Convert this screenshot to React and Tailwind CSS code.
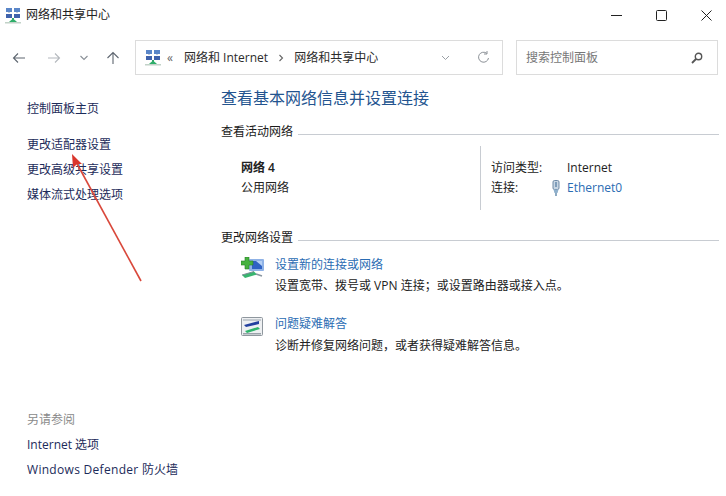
import React from "react";

const FONT = "font-['Open_Sans','Noto_Sans_CJK_SC',sans-serif]";

function NetIcon() {
  return (
    <svg width="16" height="17" viewBox="0 0 16 17" className="shrink-0">
      <rect x="1" y="1" width="6" height="4" fill="#5a86c8" />
      <rect x="9" y="1" width="6" height="4" fill="#5a86c8" />
      <rect x="1" y="7" width="6" height="4" fill="#3f62ac" />
      <rect x="9" y="7" width="6" height="4" fill="#3f62ac" />
      <rect x="3" y="5" width="2" height="1" fill="#c4cede" />
      <rect x="11" y="5" width="2" height="1" fill="#c4cede" />
      <rect x="7" y="11" width="2" height="3" fill="#3aa76d" />
      <path d="M4 15 L8 11.5 L12 15 Z" fill="#2fae6a" />
      <rect x="0" y="15" width="16" height="1.5" fill="#c2d2c8" />
    </svg>
  );
}

function NewConnIcon() {
  return (
    <svg width="24" height="22" viewBox="0 0 24 22" className="shrink-0">
      <rect x="8" y="2" width="15" height="12" rx="1" fill="#8fb2e6" />
      <path d="M11 4 H21 V12 H11 Z" fill="#2f62c4" />
      <path d="M15 4 H21 V9 Z" fill="#b5d0f4" />
      <path d="M4 0 H8 V4 H12 V8 H8 V12 H4 V8 H0 V4 H4 Z" fill="#46b23f" stroke="#2a7d2a" strokeWidth="0.6" />
      <path d="M1 18 L13 14.5 L16 17.5 L4 21 Z" fill="#39b56f" />
      <path d="M1 18 L13 14.5" stroke="#7d8c95" strokeWidth="1" />
      <path d="M15 17 L21 19" stroke="#8a96a0" strokeWidth="1.5" />
    </svg>
  );
}

function TroubleIcon() {
  return (
    <svg width="22" height="19" viewBox="0 0 22 19" className="shrink-0">
      <rect x="0.5" y="0.5" width="21" height="18" rx="1" fill="#eef0f2" stroke="#8f979e" />
      <rect x="2" y="2" width="18" height="2" fill="#c4cad0" />
      <path d="M3 8 L18 4 L18 7 L5 10 Z" fill="#23409f" />
      <path d="M4 14 L17 10 L19 12 L6 16 Z" fill="#2fb56c" />
      <rect x="2" y="16" width="18" height="1.5" fill="#9aa3aa" />
    </svg>
  );
}

function PlugIcon() {
  return (
    <svg width="10" height="16" viewBox="0 0 10 16" className="shrink-0">
      <rect x="2" y="0.5" width="6" height="9" rx="1.5" fill="#c8d6e3" stroke="#6f8aa6" />
      <rect x="4" y="2" width="2" height="5" fill="#7f9db9" />
      <path d="M2.5 9.5 H7.5 L6.5 13 H3.5 Z" fill="#8fb0cc" />
      <rect x="4.3" y="13" width="1.4" height="3" fill="#5f86a8" />
    </svg>
  );
}

function Section({ title }) {
  return (
    <div className="flex items-center h-5 pr-[7px] text-[#1a1a1a]">
      <span>{title}</span>
      <div className="flex-1 h-px bg-[#c8ccd2] ml-[5px] mt-[4px]" />
    </div>
  );
}

export default function App() {
  return (
    <div className={`relative w-[726px] h-[496px] bg-white overflow-hidden flex flex-col text-[12px] leading-5 ${FONT}`}>
      {/* title bar */}
      <div className="h-[30px] flex items-center pl-[5px] text-[#222]">
        <NetIcon />
        <span className="ml-[5px]">网络和共享中心</span>
        <div className="ml-auto flex items-center pr-[14px] gap-[34px]">
          <svg width="11" height="11" viewBox="0 0 11 11"><path d="M0 5.5 H11" stroke="#222" strokeWidth="1" /></svg>
          <svg width="11" height="11" viewBox="0 0 11 11"><rect x="0.5" y="0.5" width="10" height="10" rx="1" fill="none" stroke="#222" /></svg>
          <svg width="11" height="11" viewBox="0 0 11 11"><path d="M0.5 0.5 L10.5 10.5 M10.5 0.5 L0.5 10.5" stroke="#222" strokeWidth="1" /></svg>
        </div>
      </div>

      {/* nav bar */}
      <div className="h-[35px] mt-[10px] flex items-center shrink-0">
        <div className="w-[135px] flex items-center pl-[12px] shrink-0">
          <svg width="14" height="12" viewBox="0 0 14 12"><path d="M13 6 H1.5 M6 1.5 L1.5 6 L6 10.5" fill="none" stroke="#5e6670" strokeWidth="1.1" /></svg>
          <svg width="14" height="12" viewBox="0 0 14 12" className="ml-[21px]"><path d="M1 6 H12.5 M8 1.5 L12.5 6 L8 10.5" fill="none" stroke="#b4b8bd" strokeWidth="1.1" /></svg>
          <svg width="10" height="6" viewBox="0 0 10 6" className="ml-[18px]"><path d="M1.5 1 L5 4.5 L8.5 1" fill="none" stroke="#8a9097" strokeWidth="1.1" /></svg>
          <svg width="14" height="14" viewBox="0 0 14 14" className="ml-[17px]"><path d="M7 13 V1.5 M1.5 7 L7 1.5 L12.5 7" fill="none" stroke="#5e6670" strokeWidth="1.1" /></svg>
        </div>
        <div className="w-[368px] h-[35px] border border-[#dcdcdc] flex items-center pl-[9px] shrink-0 text-[#2b2b2b]">
          <NetIcon />
          <span className="ml-[6px] text-[#666] w-[10px]">«</span>
          <span className="ml-[7px]">网络和 Internet</span>
          <svg width="6" height="8" viewBox="0 0 6 8" className="ml-[10px]"><path d="M1.5 1 L4.5 4 L1.5 7" fill="none" stroke="#666" strokeWidth="1.1" /></svg>
          <span className="ml-[10px]">网络和共享中心</span>
          <svg width="9" height="6" viewBox="0 0 9 6" className="ml-auto mr-[27px]"><path d="M1 1 L4.5 4.5 L8 1" fill="none" stroke="#9a9fa5" strokeWidth="1" /></svg>
          <svg width="13" height="13" viewBox="0 0 13 13" className="mr-[12px]"><path d="M11.5 7 A5 5 0 1 1 9.8 2.4 M10 0 V3 H7" fill="none" stroke="#8d9298" strokeWidth="1" /></svg>
        </div>
        <div className="ml-[13px] w-[202px] h-[35px] border border-[#dcdcdc] flex items-center pl-[9px] pr-[14px] shrink-0 text-[#777]">
          <span>搜索控制面板</span>
          <svg width="12" height="12" viewBox="0 0 12 12" className="ml-auto"><circle cx="7.5" cy="4.5" r="3.2" fill="none" stroke="#555" strokeWidth="1.4" /><path d="M5 7 L1 11" stroke="#555" strokeWidth="1.8" /></svg>
        </div>
      </div>

      {/* body */}
      <div className="flex-1 flex min-h-0">
        <aside className="w-[221px] shrink-0 pl-[27px] pt-[24px] pb-[16px] flex flex-col text-[#1c2b5a]">
          <div>控制面板主页</div>
          <div className="mt-[16px] flex flex-col gap-[5px]">
            <div>更改适配器设置</div>
            <div>更改高级共享设置</div>
            <div>媒体流式处理选项</div>
          </div>
          <div className="mt-auto flex flex-col gap-[5px]">
            <div className="text-[#8a8a8a]">另请参阅</div>
            <div>Internet 选项</div>
            <div><span className="tracking-[0.3px]">Windows Defender </span>防火墙</div>
          </div>
        </aside>

        <main className="flex-1 pt-[11px] text-[#222]">
          <h1 className="text-[16px] leading-6 text-[#23548f]">查看基本网络信息并设置连接</h1>
          <div className="mt-[12px]"><Section title="查看活动网络" /></div>

          <div className="mt-[4px] h-[64px] flex">
            <div className="w-[260px] pl-[20px] pt-[12px] border-r border-[#c8ccd2]">
              <div className="font-semibold">网络 4</div>
              <div>公用网络</div>
            </div>
            <div className="pl-[10px] pt-[12px]">
              <div className="flex">
                <span className="w-[76px]">访问类型:</span>
                <span>Internet</span>
              </div>
              <div className="flex items-center">
                <span className="w-[60px]">连接:</span>
                <PlugIcon />
                <span className="ml-[6px] text-[#2a6cb3]">Ethernet0</span>
              </div>
            </div>
          </div>

          <div className="mt-[18px]"><Section title="更改网络设置" /></div>

          <div className="mt-[7px] flex pl-[20px]">
            <div className="w-[34px] pt-[2px]"><NewConnIcon /></div>
            <div>
              <div className="text-[#2a6cb3]">设置新的连接或网络</div>
              <div className="mt-px">设置宽带、拨号或 VPN 连接；或设置路由器或接入点。</div>
            </div>
          </div>

          <div className="mt-[18px] flex pl-[20px]">
            <div className="w-[34px] pt-[3px]"><TroubleIcon /></div>
            <div>
              <div className="text-[#2a6cb3]">问题疑难解答</div>
              <div className="mt-[2px]">诊断并修复网络问题，或者获得疑难解答信息。</div>
            </div>
          </div>
        </main>
      </div>

      {/* annotation arrow */}
      <svg width="726" height="496" viewBox="0 0 726 496" className="absolute inset-0 pointer-events-none">
        <path d="M141 281 L75 160" stroke="#d9483b" strokeWidth="1.6" fill="none" />
        <path d="M72 154 L82 164 L77 164 L73 168 Z" fill="#d9362c" />
      </svg>
    </div>
  );
}
